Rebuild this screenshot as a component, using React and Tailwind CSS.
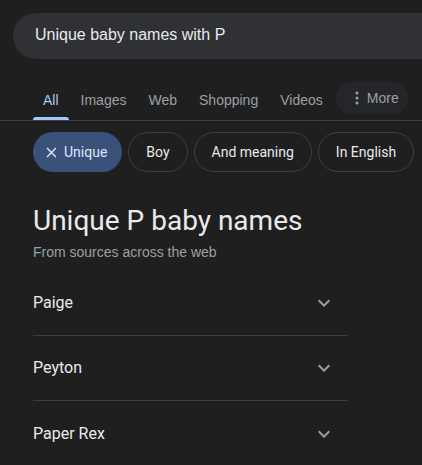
const tabs = ["All", "Images", "Web", "Shopping", "Videos"];
const chips = ["Boy", "And meaning", "In English"];
const names = ["Paige", "Peyton", "Paper Rex"];

const sans = "font-['Roboto','Liberation_Sans',sans-serif]";
const arial = "font-['Liberation_Sans','Arial',sans-serif]";

function Chevron() {
  return (
    <svg width="24" height="24" viewBox="0 0 24 24" className="fill-[#9aa0a6]">
      <path d="M7.41 8.59 12 13.17l4.59-4.58L18 10l-6 6-6-6 1.41-1.41z" />
    </svg>
  );
}

export default function App() {
  return (
    <div className="w-[422px] h-[465px] overflow-hidden bg-[#1f1f1f]">
      {/* search box */}
      <div className="pt-[13px] pl-[13px]">
        <div className={`w-[440px] h-[46px] rounded-full bg-[#303134] flex items-center pl-[22px] pb-[2px] text-[16px] text-[#e8eaed] ${arial}`}>
          Unique baby names with P
        </div>
      </div>

      {/* tabs */}
      <div className="mt-[21px] border-b border-[#3c4043]">
        <div className={`flex items-end gap-[2px] pl-[33px] text-[14px] ${arial}`}>
          {tabs.map((t, i) => (
            <div key={t} className={`relative h-10 px-[10px] flex items-center ${i === 0 ? "text-[#a8c7fa]" : "text-[#9aa0a6]"}`}>
              {t}
              {i === 0 && <div className="absolute left-0 right-0 bottom-0 h-[3px] rounded-t-[3px] bg-[#a8c7fa]" />}
            </div>
          ))}
          <div className="mb-[6px] h-8 ml-[1px] pl-[19px] pr-[9px] rounded-full bg-[#252629] flex items-center gap-[8px] text-[#9aa0a6]">
            <svg width="4" height="14" viewBox="0 0 4 14" className="fill-[#9aa0a6]">
              <circle cx="2" cy="2" r="1.5" />
              <circle cx="2" cy="7" r="1.5" />
              <circle cx="2" cy="12" r="1.5" />
            </svg>
            More
          </div>
        </div>
      </div>

      {/* chips */}
      <div className={`mt-[11px] pl-[33px] flex gap-[6px] text-[14px] ${sans}`}>
        <div className="h-10 rounded-full bg-[#3a5279] text-[#dbe6fb] flex items-center pl-[10px] pr-[15px] gap-[4px]">
          <svg width="17" height="17" viewBox="0 0 24 24" className="fill-[#dbe6fb]">
            <path d="M19 6.41 17.59 5 12 10.59 6.41 5 5 6.41 10.59 12 5 17.59 6.41 19 12 13.41 17.59 19 19 17.59 13.41 12z" />
          </svg>
          Unique
        </div>
        {chips.map((c) => (
          <div key={c} className="h-10 rounded-full border border-[#3c4043] text-[#e8eaed] flex items-center px-[17px]">
            {c}
          </div>
        ))}
      </div>

      {/* heading */}
      <div className="pl-[33px] pt-[31px]">
        <h1 className={`text-[28px] leading-[36px] text-[#e8eaed] ${sans}`}>Unique P baby names</h1>
        <p className={`mt-[3px] text-[14px] leading-5 text-[#9aa0a6] ${arial}`}>From sources across the web</p>
      </div>

      {/* list */}
      <div className={`mt-[9px] ml-[33px] w-[315px] ${sans}`}>
        {names.map((n, i) => (
          <div key={n} className={`h-[65px] flex items-center justify-between pr-3 text-[16px] text-[#e8eaed] ${i < names.length - 1 ? "border-b border-[#3c4043]" : ""}`}>
            {n}
            <Chevron />
          </div>
        ))}
      </div>
    </div>
  );
}
